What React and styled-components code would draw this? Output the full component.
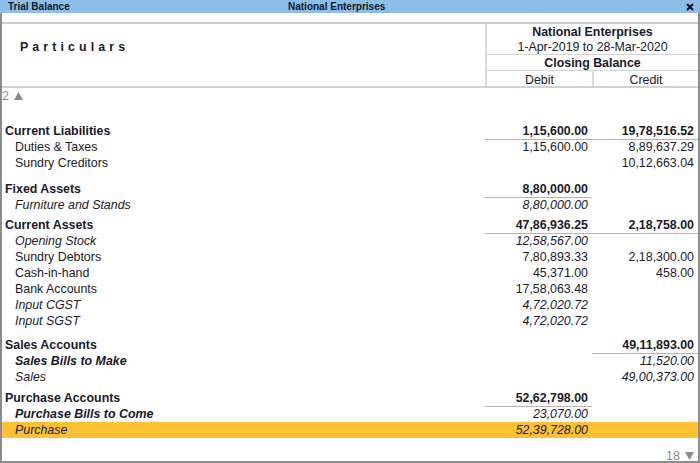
import React from "react";
import styled, { createGlobalStyle, css } from "styled-components";

const GlobalStyle = createGlobalStyle`
  html, body {
    margin: 0;
    padding: 0;
    background: #ffffff;
  }
  body {
    font-family: "Liberation Sans", Arial, sans-serif;
    color: #1a1a2a;
  }
`;

const COLS = "1fr 107px 106px";

const Window = styled.div`
  width: 700px;
  height: 463px;
  box-sizing: border-box;
  border: 2px solid #8c8c8c;
  border-top: none;
  display: flex;
  flex-direction: column;
  background: #fff;
`;

const TitleBar = styled.div`
  height: 13px;
  margin: 0 -2px;
  background: #8cbee8;
  display: flex;
  align-items: center;
  font-size: 10px;
  font-weight: bold;
  color: #101828;
  & .left {
    width: 280px;
    padding-left: 8px;
  }
  & .mid {
    flex: 1;
  }
  & .close {
    width: 8px;
    margin-right: 6px;
    display: flex;
  }
`;

const Spacer = styled.div`
  height: 9px;
`;

const Header = styled.div`
  display: grid;
  grid-template-columns: ${COLS};
  border-top: 2px solid #cdcdcd;
  border-bottom: 2px solid #d2d2d2;
  font-size: 12.4px;
`;

const Particulars = styled.div`
  padding: 15px 0 0 18px;
  font-weight: bold;
  letter-spacing: 4.1px;
  line-height: 16px;
`;

const Period = styled.div`
  grid-column: 2 / 4;
  border-left: 2px solid #dadada;
  display: grid;
  grid-template-columns: 1fr 106px;
  text-align: center;
`;

const HeadCell = styled.div`
  grid-column: ${(p) => (p.$wide ? "1 / 3" : "auto")};
  height: ${(p) => p.$h}px;
  padding-top: ${(p) => p.$pt || 1}px;
  line-height: ${(p) => p.$lh || 15}px;
  font-weight: ${(p) => (p.$bold ? "bold" : "normal")};
  border-bottom: ${(p) => (p.$rule ? "1px solid #d6d6d6" : "none")};
  border-left: ${(p) => (p.$sep ? "2px solid #dadada" : "none")};
  box-sizing: border-box;
  & .sub {
    font-weight: normal;
  }
`;

const Body = styled.div`
  flex: 1;
  display: flex;
  flex-direction: column;
  font-size: 12.4px;
`;

const Marker = styled.div`
  height: 16px;
  line-height: 16px;
  color: #8a8a8a;
  display: flex;
  align-items: center;
  gap: 5px;
  justify-content: ${(p) => (p.$end ? "flex-end" : "flex-start")};
  padding-right: ${(p) => (p.$end ? "4px" : "0")};
  font-size: 12.5px;
`;

const List = styled.div`
  margin-top: 19px;
`;

const Group = styled.div`
  margin-top: ${(p) => p.$gap}px;
`;

const Row = styled.div`
  display: grid;
  grid-template-columns: ${COLS};
  height: 16px;
  line-height: 17px;
  background: ${(p) => (p.$selected ? "#fdc232" : "transparent")};
`;

const variants = {
  group: css`
    font-weight: bold;
  `,
  plain: css``,
  italic: css`
    font-style: italic;
  `,
  boldItalic: css`
    font-style: italic;
    font-weight: bold;
  `,
};

const Label = styled.div`
  padding-left: ${(p) => (p.$indent ? 13 : 3)}px;
  white-space: nowrap;
  ${(p) => variants[p.$kind]}
`;

const Amount = styled.div`
  text-align: right;
  padding-right: 4px;
  box-sizing: border-box;
  ${(p) => (p.$kind === "group" ? variants.group : p.$kind === "plain" ? "" : variants.italic)}
  box-shadow: ${(p) => (p.$rule ? "inset 0 -1px 0 #b4b4b4" : "none")};
`;

const Footer = styled.div`
  margin-top: auto;
  margin-bottom: -3px;
`;

const groups = [
  {
    name: "Current Liabilities",
    dr: "1,15,600.00",
    cr: "19,78,516.52",
    gap: 0,
    items: [
      { name: "Duties & Taxes", kind: "plain", dr: "1,15,600.00", cr: "8,89,637.29" },
      { name: "Sundry Creditors", kind: "plain", cr: "10,12,663.04" },
    ],
  },
  {
    name: "Fixed Assets",
    dr: "8,80,000.00",
    gap: 10,
    items: [{ name: "Furniture and Stands", kind: "italic", dr: "8,80,000.00" }],
  },
  {
    name: "Current Assets",
    dr: "47,86,936.25",
    cr: "2,18,758.00",
    gap: 4,
    items: [
      { name: "Opening Stock", kind: "italic", dr: "12,58,567.00" },
      { name: "Sundry Debtors", kind: "plain", dr: "7,80,893.33", cr: "2,18,300.00" },
      { name: "Cash-in-hand", kind: "plain", dr: "45,371.00", cr: "458.00" },
      { name: "Bank Accounts", kind: "plain", dr: "17,58,063.48" },
      { name: "Input CGST", kind: "italic", dr: "4,72,020.72" },
      { name: "Input SGST", kind: "italic", dr: "4,72,020.72" },
    ],
  },
  {
    name: "Sales Accounts",
    cr: "49,11,893.00",
    gap: 8,
    items: [
      { name: "Sales Bills to Make", kind: "boldItalic", cr: "11,520.00" },
      { name: "Sales", kind: "italic", cr: "49,00,373.00" },
    ],
  },
  {
    name: "Purchase Accounts",
    dr: "52,62,798.00",
    gap: 5,
    items: [
      { name: "Purchase Bills to Come", kind: "boldItalic", dr: "23,070.00" },
      { name: "Purchase", kind: "italic", dr: "52,39,728.00", selected: true },
    ],
  },
];

const CloseIcon = () => (
  <svg width="8" height="8" viewBox="0 0 8 8">
    <path d="M1 1 L7 7 M7 1 L1 7" stroke="#111" strokeWidth="2" />
  </svg>
);

const Arrow = ({ down }) => (
  <svg width="9" height="8" viewBox="0 0 9 8">
    <polygon points={down ? "0,0 9,0 4.5,8" : "4.5,0 9,8 0,8"} fill="#8a8a8a" />
  </svg>
);

const App = () => {
  return (
    <>
      <GlobalStyle />
      <Window>
        <TitleBar>
          <span className="left">Trial Balance</span>
          <span className="mid">National Enterprises</span>
          <span className="close">
            <CloseIcon />
          </span>
        </TitleBar>
        <Spacer />
        <Header>
          <Particulars>Particulars</Particulars>
          <Period>
            <HeadCell $wide $h={31} $bold $rule>
              National Enterprises
              <div className="sub">1-Apr-2019 to 28-Mar-2020</div>
            </HeadCell>
            <HeadCell $wide $h={16} $bold $rule>
              Closing Balance
            </HeadCell>
            <HeadCell $h={15} $pt={2} $lh={14}>
              Debit
            </HeadCell>
            <HeadCell $h={15} $pt={2} $lh={14} $sep>
              Credit
            </HeadCell>
          </Period>
        </Header>
        <Body>
          <Marker>
            2 <Arrow />
          </Marker>
          <List>
            {groups.map((g) => (
              <Group key={g.name} $gap={g.gap}>
                <Row>
                  <Label $kind="group">{g.name}</Label>
                  <Amount $kind="group" $rule={!!g.dr}>
                    {g.dr}
                  </Amount>
                  <Amount $kind="group" $rule={!!g.cr}>
                    {g.cr}
                  </Amount>
                </Row>
                {g.items.map((it) => (
                  <Row key={it.name} $selected={it.selected}>
                    <Label $indent $kind={it.kind}>
                      {it.name}
                    </Label>
                    <Amount $kind={it.kind}>{it.dr}</Amount>
                    <Amount $kind={it.kind}>{it.cr}</Amount>
                  </Row>
                ))}
              </Group>
            ))}
          </List>
          <Footer>
            <Marker $end>
              18 <Arrow down />
            </Marker>
          </Footer>
        </Body>
      </Window>
    </>
  );
};

export default App;
